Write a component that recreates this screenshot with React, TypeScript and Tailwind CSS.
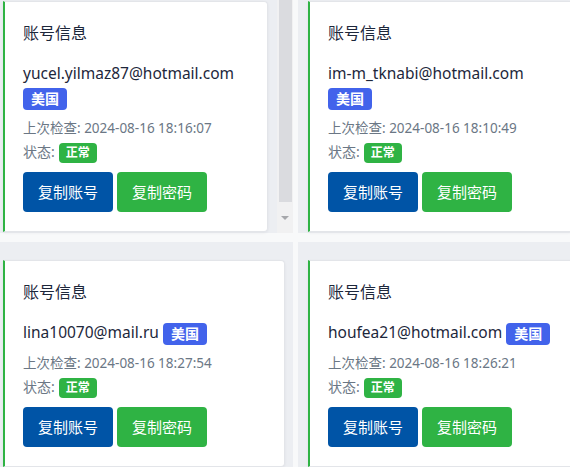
const accounts = [
  { email: "yucel.yilmaz87@hotmail.com", region: "美国", checked: "2024-08-16 18:16:07" },
  { email: "im-m_tknabi@hotmail.com", region: "美国", checked: "2024-08-16 18:10:49" },
  { email: "lina10070@mail.ru", region: "美国", checked: "2024-08-16 18:27:54" },
  { email: "houfea21@hotmail.com", region: "美国", checked: "2024-08-16 18:26:21" },
];

type Account = (typeof accounts)[number];

function AccountCard({ a, width }: { a: Account; width: string }) {
  return (
    <div
      className={`${width} shrink-0 rounded-r-[4px] border border-[#e3e5e9] border-l-2 border-l-[#2fb344] bg-white pt-[19px] pr-5 pb-[19px] pl-[18px] shadow-[0_1px_3px_rgba(30,41,59,0.06)]`}
    >
      <div className="mb-4 text-[16px] leading-6 text-[#1d273b]">账号信息</div>
      <div className="mb-2 text-[15.5px] leading-6 text-[#1d273b]">
        {a.email}{" "}
        <span className="inline-block h-[22px] rounded-[4px] bg-[#4263eb] px-2 align-middle text-[14px] leading-[22px] font-bold text-white">
          {a.region}
        </span>
      </div>
      <div className="mb-1 text-[13.5px] leading-[21px] text-[#6b7785]">上次检查: {a.checked}</div>
      <div className="flex h-[21px] items-center gap-1 text-[14px] text-[#6b7785]">
        <span className="mb-1">状态:</span>
        <span className="inline-block h-5 rounded-[4px] bg-[#2fb344] px-[7px] text-[12px] leading-5 font-bold text-white">
          正常
        </span>
      </div>
      <div className="mt-2 flex gap-1">
        <button className="h-10 w-[90px] rounded-[4px] bg-[#0054a6] text-[15px] text-white">复制账号</button>
        <button className="h-10 w-[90px] rounded-[4px] bg-[#2fb344] text-[15px] text-white">复制密码</button>
      </div>
    </div>
  );
}

function ScrollTrack() {
  return (
    <div className="flex w-4 shrink-0 flex-col items-center bg-[#f1f1f2]">
      <div className="w-[13px] flex-1 bg-[#dadbdf]" />
      <div className="flex h-[31px] w-full items-center justify-center">
        <div className="h-0 w-0 border-x-[4px] border-t-[4px] border-x-transparent border-t-[#a6a7ab]" />
      </div>
    </div>
  );
}

export default function App() {
  return (
    <div
      className="h-[467px] w-[570px] overflow-hidden bg-[#f8f9fa]"
      style={{ fontFamily: '"Noto Sans", "Noto Sans CJK SC", sans-serif' }}
    >
      <div className="-mt-2 -ml-[7px] grid w-[605px] grid-cols-[300px_300px] gap-x-[5px] gap-y-[9px]">
        <div className="flex h-[241px] bg-[#eceef2]">
          <div className="flex-1 pt-[9px] pl-[10px]">
            <AccountCard a={accounts[0]} width="w-[265px]" />
          </div>
          <ScrollTrack />
        </div>
        <div className="flex h-[241px] bg-[#eceef2]">
          <div className="flex-1 pt-[9px] pl-[10px]">
            <AccountCard a={accounts[1]} width="w-[265px]" />
          </div>
          <ScrollTrack />
        </div>
        <div className="h-[240px] bg-[#eceef2] pt-[18px] pl-[10px]">
          <AccountCard a={accounts[2]} width="w-[282px]" />
        </div>
        <div className="h-[240px] bg-[#eceef2] pt-[18px] pl-[10px]">
          <AccountCard a={accounts[3]} width="w-[282px]" />
        </div>
      </div>
    </div>
  );
}
